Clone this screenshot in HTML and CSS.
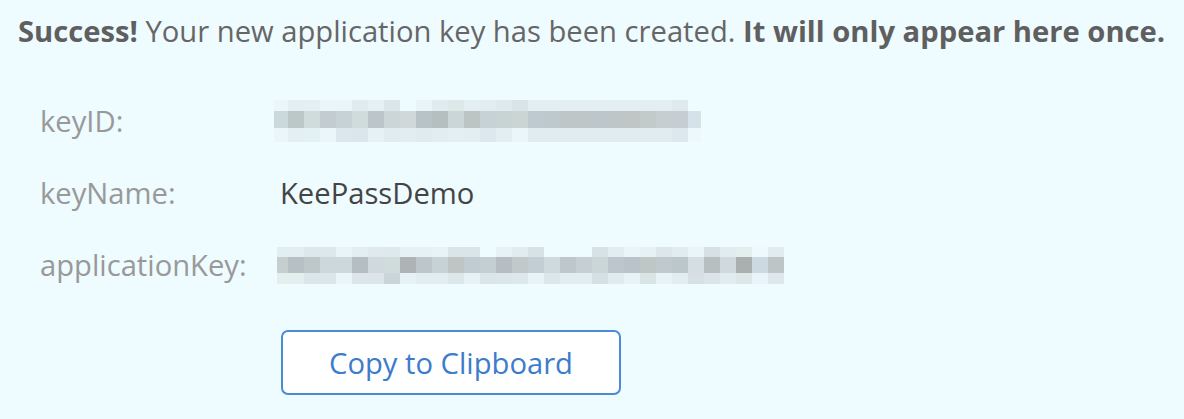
FILE: index.html
```html
<!DOCTYPE html>
<html lang="en">
<head>
<meta charset="utf-8">
<title>Application key created</title>
<link rel="stylesheet" href="styles.css">
</head>
<body>
<div class="page">
  <p class="notice"><strong>Success!</strong> Your new application key has been created. <strong>It will only appear here once.</strong></p>
  <div class="details">
    <div class="row">
      <div class="label">keyID:</div>
      <div class="value">
        <div class="blur blur-keyid" aria-label="hidden key id">
          <div class="strip keyid-top"></div>
          <div class="strip keyid-mid"></div>
          <div class="strip keyid-bot"></div>
        </div>
      </div>
    </div>
    <div class="row">
      <div class="label">keyName:</div>
      <div class="value"><span class="name">KeePassDemo</span></div>
    </div>
    <div class="row">
      <div class="label">applicationKey:</div>
      <div class="value">
        <div class="blur blur-appkey" aria-label="hidden application key">
          <div class="strip appkey-top"></div>
          <div class="strip appkey-mid"></div>
          <div class="strip appkey-bot"></div>
        </div>
      </div>
    </div>
    <div class="actions">
      <button class="copy-btn" type="button">Copy to Clipboard</button>
    </div>
  </div>
</div>
</body>
</html>
```
FILE: styles.css
```css
html, body {
  margin: 0;
  padding: 0;
  background: #eefbff;
}

body {
  font-family: "Open Sans", "Noto Sans", sans-serif;
  font-size: 29.2px;
  color: #666666;
  height: 419px;
  overflow: hidden;
}

.page {
  padding: 11px 18px 0 18px;
}

.notice {
  margin: 0;
  line-height: 40px;
  white-space: nowrap;
  color: #666666;
}

.notice strong {
  font-weight: 700;
  color: #5f5f5f;
}

.details {
  margin-top: 34px;
  margin-left: 22px;
}

.row {
  display: grid;
  grid-template-columns: 234px 1fr;
  align-items: center;
  height: 72px;
}

.label {
  color: #999999;
  line-height: 36px;
}

.value {
  display: flex;
  align-items: center;
}

.name {
  color: #444444;
  margin-left: 6px;
  line-height: 36px;
}

.blur {
  display: flex;
  flex-direction: column;
}

.strip {
  width: 100%;
}

.blur-keyid {
  width: 427px;
}

.blur-keyid .keyid-top { height: 11px; }
.blur-keyid .keyid-mid { height: 17px; }
.blur-keyid .keyid-bot { height: 14px; }

.blur-appkey {
  width: 507px;
  margin-left: 3px;
}

.blur-appkey .appkey-top { height: 10px; }
.blur-appkey .appkey-mid { height: 16px; }
.blur-appkey .appkey-bot { height: 11px; }

.keyid-top {
  background: linear-gradient(to right,
    #ebf6fb 0 14px, #e2eef3 14px 30px, #e3eff4 30px 46px, #eaf5fa 46px 62px,
    #e9f5fa 62px 78px, #e0ebf0 78px 94px, #e5f0f5 94px 110px, #dae6eb 110px 126px,
    transparent 126px 142px, #e8f4f9 142px 158px, #e0ebf0 158px 174px, #dde8e8 174px 190px,
    #e4eff3 190px 206px, #e2edf2 206px 222px, #dfeaf0 222px 238px, #d9e4ea 238px 254px,
    #e3eef3 254px 398px, #dfeaf0 398px 414px, transparent 414px);
}

.keyid-mid {
  background: linear-gradient(to right,
    #ccd9da 0 14px, #bcc7c8 14px 30px, #d0dcdc 30px 46px, #c2ccd1 46px 62px,
    #c6d2d6 62px 78px, #d0dbdc 78px 94px, #bcc5ca 94px 110px, #ccd6d8 110px 126px,
    #d0d8d9 126px 142px, #b7c3c7 142px 158px, #b6bfc0 158px 174px, #cad6d7 174px 190px,
    #bcc4c4 190px 206px, #c6d2d6 206px 222px, #c8d3d3 222px 238px, #cbd5d3 238px 254px,
    #bfcad0 254px 270px, #bec9ce 270px 286px, #bec6c8 286px 318px, #bdc6ca 318px 334px,
    #bfc6c7 334px 350px, #c0c6c5 350px 366px, #c3cbca 366px 382px, #c6ced1 382px 398px,
    #c6ced4 398px 414px, #d5e2ea 414px 427px);
}

.keyid-bot {
  background: linear-gradient(to right,
    #ebf6fb 0 14px, #e4eff4 14px 30px, #e3f0f4 30px 46px, #ebf6fb 46px 62px,
    #dce7ed 62px 78px, #dae6eb 78px 94px, #e6f1f6 94px 110px, #e1ecf1 110px 126px,
    #e2edf2 126px 142px, #e0ebf0 142px 158px, #e2edf2 158px 174px, #e4eff4 174px 190px,
    #e3eef3 190px 206px, #dde8ee 206px 222px, #e3eef3 222px 238px, #eaf6fa 238px 254px,
    #e1ecf1 254px 398px, #dde8ee 398px 414px, #ecf8fc 414px 427px);
}

.appkey-top {
  background: linear-gradient(to right,
    #e3eef3 0 27px, #dde8ee 27px 59px, #e8f4f9 59px 75px, #e3eef3 75px 91px,
    #dfe9ef 91px 107px, #dee9ee 107px 123px, #e6f1f6 123px 155px, #e8f3f8 155px 171px,
    #dae5ea 171px 203px, transparent 203px 219px, #e6f2f7 219px 235px, #e1ecf1 235px 251px,
    #d7e2e5 251px 267px, transparent 267px 315px, #d6e2e3 315px 331px, #e2edf2 331px 347px,
    #eaf5fa 347px 363px, #e6f1f6 363px 379px, #dce6ec 379px 395px, #e1ecf1 395px 411px,
    #eaf5fa 411px 427px, #d7e0e3 427px 443px, #e1ecf1 443px 459px, #e3eeef 459px 475px,
    #eef9fd 475px 491px, #e1ecf1 491px 507px);
}

.appkey-mid {
  background: linear-gradient(to right,
    #c5cfd0 0 11px, #b7c1c3 11px 27px, #bec8c9 27px 43px, #ccd8dc 43px 75px,
    #b5bfc1 75px 91px, #d0dadc 91px 107px, #d0dbdb 107px 123px, #aeb4b5 123px 139px,
    #bdc6c9 139px 155px, #c6d2d6 155px 171px, #bfc5c4 171px 187px, #c1ccd2 187px 203px,
    #c4cfd4 203px 219px, #b7bec1 219px 235px, #c1c9ca 235px 251px, #c3ced4 251px 267px,
    #cfdadc 267px 283px, #bec8ca 283px 299px, #c6d0d2 299px 315px, #cbd6d9 315px 331px,
    #bcc6cc 331px 347px, #b9c3c9 347px 363px, #bfc6c6 363px 379px, #c0cacc 379px 395px,
    #bcc7cc 395px 411px, #d5dfe1 411px 427px, #b7bfc1 427px 443px, #d0dadc 443px 459px,
    #aaafb0 459px 475px, #ccd9e0 475px 491px, #bec5c7 491px 507px);
}

.appkey-bot {
  background: linear-gradient(to right,
    #e3eeef 0 27px, #dbe6eb 27px 59px, #e9f5fa 59px 75px, #dce6ea 75px 107px,
    #c9d5d9 107px 123px, #e6f2f7 123px 139px, #e2edf2 139px 171px, #dce7e9 171px 187px,
    #e6f2f7 187px 203px, #dae5ea 203px 219px, #dbe6eb 219px 235px, #dde8ee 235px 251px,
    #e7f3f8 251px 267px, #dce7ec 267px 283px, #e2edf2 283px 315px, #d5e0e3 315px 331px,
    #e0ebf0 331px 347px, #e7f3f8 347px 363px, #d9e4e5 363px 379px, #e7f3f8 379px 395px,
    #e2edf2 395px 411px, #d7e1e5 411px 427px, #dbe5e8 427px 443px, #e1ecef 443px 459px,
    #dde7e8 459px 475px, #e8f4f9 475px 491px, #dde7ec 491px 507px);
}

.actions {
  padding-left: 241px;
  margin-top: 29px;
}

.copy-btn {
  box-sizing: border-box;
  width: 340px;
  height: 65px;
  padding: 0;
  background: #ffffff;
  border: 2px solid #4a8bd6;
  border-radius: 7px;
  font-family: "Open Sans", "Noto Sans", sans-serif;
  font-size: 29.2px;
  color: #3d7ccb;
  cursor: pointer;
}
```
